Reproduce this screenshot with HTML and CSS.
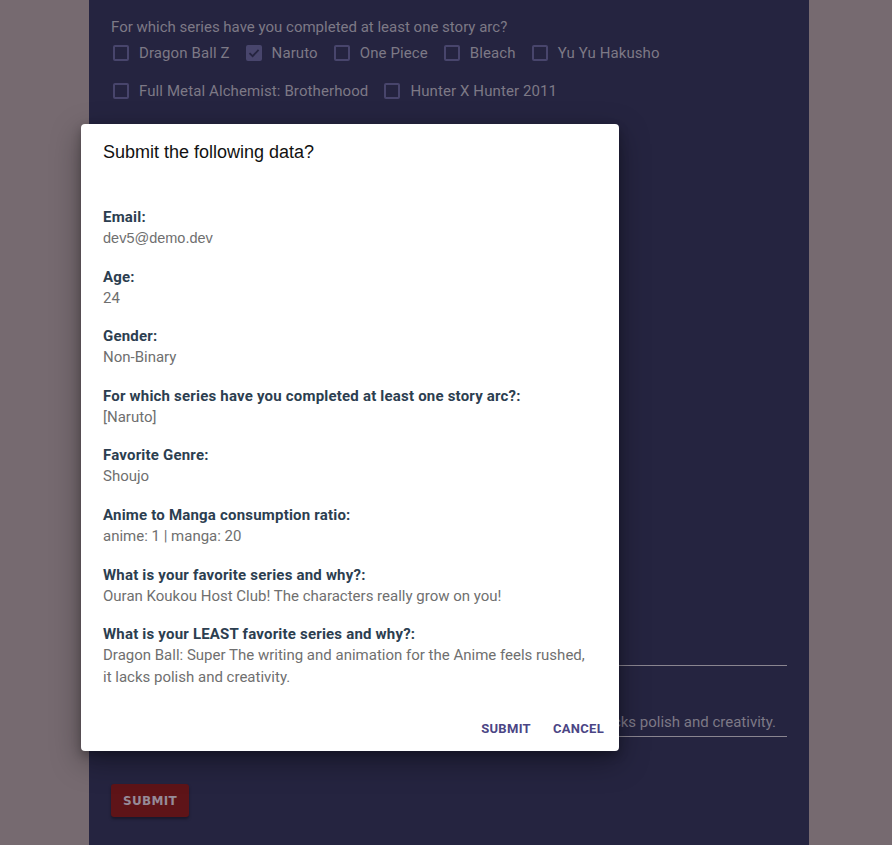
FILE: index.html
```html
<!DOCTYPE html>
<html lang="en">
<head>
<meta charset="utf-8">
<title>Anime survey</title>
<link rel="stylesheet" href="styles.css">
</head>
<body>
<main class="panel">
  <form class="survey">
    <p class="question">For which series have you completed at least one story arc?</p>
    <div class="checks">
      <label class="check"><span class="box"></span>Dragon Ball Z</label>
      <label class="check"><span class="box checked"><svg viewBox="0 0 16 16" width="16" height="16"><path d="M3.5 8.2 6.6 11.2 12.6 4.8" fill="none" stroke="#252440" stroke-width="1.8"/></svg></span>Naruto</label>
      <label class="check"><span class="box"></span>One Piece</label>
      <label class="check"><span class="box"></span>Bleach</label>
      <label class="check"><span class="box"></span>Yu Yu Hakusho</label>
      <label class="check"><span class="box"></span>Full Metal Alchemist: Brotherhood</label>
      <label class="check"><span class="box"></span>Hunter X Hunter 2011</label>
    </div>

    <div class="hidden-fields" aria-hidden="true"></div>

    <div class="field" aria-label="What is your favorite series and why?">
      <div class="field-text"></div>
    </div>
    <div class="field second" aria-label="What is your LEAST favorite series and why?">
      <div class="field-text"><span>Dragon Ball: Super The writing and animation for the Anime feels rushed, it lacks polish and creativity.</span></div>
    </div>

    <button type="button" class="submit-btn">Submit</button>
  </form>
</main>

<div class="dialog" role="dialog">
  <h2 class="dialog-title">Submit the following data?</h2>
  <dl class="summary">
    <div class="item"><dt>Email:</dt><dd class="mail">dev5@demo.dev</dd></div>
    <div class="item"><dt>Age:</dt><dd>24</dd></div>
    <div class="item"><dt>Gender:</dt><dd>Non-Binary</dd></div>
    <div class="item"><dt>For which series have you completed at least one story arc?:</dt><dd>[Naruto]</dd></div>
    <div class="item"><dt>Favorite Genre:</dt><dd>Shoujo</dd></div>
    <div class="item"><dt>Anime to Manga consumption ratio:</dt><dd>anime: 1 | manga: 20</dd></div>
    <div class="item"><dt>What is your favorite series and why?:</dt><dd>Ouran Koukou Host Club! The characters really grow on you!</dd></div>
    <div class="item"><dt>What is your LEAST favorite series and why?:</dt><dd>Dragon Ball: Super The writing and animation for the Anime feels rushed, it lacks polish and creativity.</dd></div>
  </dl>
  <div class="actions">
    <button type="button" class="text-btn">Submit</button>
    <button type="button" class="text-btn">Cancel</button>
  </div>
</div>
</body>
</html>
```

FILE: styles.css
```css
html, body {
  margin: 0;
  padding: 0;
}
body {
  background: #766a70;
  font-family: Roboto, "Noto Sans", sans-serif;
  min-height: 845px;
}
.panel {
  margin-left: 89px;
  width: 720px;
  min-height: 845px;
  box-sizing: border-box;
  background: #252440;
  padding: 17px 22px 20px;
  color: #7d7986;
}
.survey {
  display: flex;
  flex-direction: column;
  align-items: stretch;
}
.question {
  margin: 0;
  font-size: 15px;
  line-height: 20px;
}
.checks {
  display: flex;
  flex-wrap: wrap;
  column-gap: 14px;
  row-gap: 14px;
  margin-top: 4px;
  width: 560px;
}
.check {
  display: flex;
  align-items: center;
  gap: 10px;
  height: 24px;
  font-size: 15px;
  letter-spacing: 0.1px;
  padding-left: 2px;
}
.box {
  width: 16px;
  height: 16px;
  box-sizing: border-box;
  border: 2px solid #48456c;
  border-radius: 2px;
  display: inline-flex;
}
.box.checked {
  background: #48456c;
  border-color: #48456c;
}
.box.checked svg {
  margin: -2px;
}
.hidden-fields {
  height: 492px;
}
.field {
  margin-top: 19px;
  padding-top: 20px;
  border-bottom: 1px solid #8a8590;
}
.field-text {
  font-size: 15px;
  line-height: 22px;
  padding: 6px 11px 3px 0;
  height: 22px;
  overflow: hidden;
  display: flex;
  justify-content: flex-end;
  color: #7d7986;
}
.field-text span {
  white-space: nowrap;
  flex-shrink: 0;
}
.submit-btn {
  align-self: flex-start;
  margin-top: 47px;
  width: 78px;
  height: 33px;
  border: 0;
  border-radius: 3px;
  background: #5e1418;
  color: #968b98;
  font-family: "DejaVu Sans", sans-serif;
  font-weight: bold;
  font-size: 12px;
  letter-spacing: 0.3px;
  text-transform: uppercase;
  box-shadow: 0 2px 3px rgba(0, 0, 0, 0.35);
}

.dialog {
  position: absolute;
  left: 81px;
  top: 124px;
  width: 538px;
  height: 627px;
  box-sizing: border-box;
  background: #fff;
  border-radius: 4px;
  box-shadow: 0 10px 30px rgba(0, 0, 0, 0.35), 0 4px 10px rgba(0, 0, 0, 0.25);
  display: flex;
  flex-direction: column;
}
.dialog-title {
  margin: 0;
  padding: 17px 22px 0;
  font-family: "Liberation Sans", Arial, sans-serif;
  font-weight: normal;
  font-size: 18px;
  line-height: 22px;
  color: #111;
}
.summary {
  margin: 44px 0 0;
  padding: 0 22px;
}
.item {
  margin-bottom: 17.6px;
}
.item dt {
  font-weight: bold;
  font-size: 15px;
  letter-spacing: 0.2px;
  line-height: 20px;
  color: #2c3e50;
}
.item dd {
  margin: 0;
  font-size: 15px;
  line-height: 22px;
  color: #6f6f6f;
}
.item dd.mail {
  font-family: "Liberation Sans", Arial, sans-serif;
  font-size: 14.5px;
}
.actions {
  margin-top: auto;
  display: flex;
  justify-content: flex-end;
  gap: 6px;
  padding: 0 7px 5px;
}
.text-btn {
  height: 36px;
  padding: 0 8px;
  border: 0;
  background: none;
  font-family: Roboto, sans-serif;
  font-weight: bold;
  font-size: 13px;
  letter-spacing: 0.3px;
  text-transform: uppercase;
  color: #4b4585;
}
```
